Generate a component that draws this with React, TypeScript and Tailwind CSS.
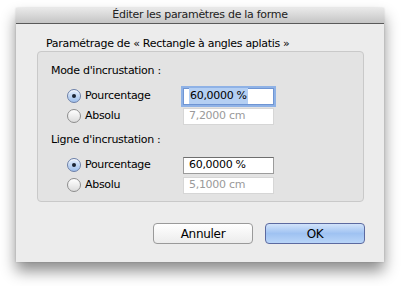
import React from "react";

const font = { fontFamily: '"Lucida Grande", "DejaVu Sans", sans-serif' };

function Radio({ checked }: { checked?: boolean }) {
  return checked ? (
    <span className="flex h-[14px] w-[14px] items-center justify-center rounded-full border border-[#6b7fa8] bg-gradient-to-b from-[#e3edfb] to-[#9fc0ec] shadow-[inset_0_1px_1px_rgba(255,255,255,0.8)]">
      <span className="h-[4px] w-[4px] rounded-full bg-[#1b2433]" />
    </span>
  ) : (
    <span className="h-[14px] w-[14px] rounded-full border border-[#8e8e8e] bg-gradient-to-b from-[#ffffff] to-[#dcdcdc]" />
  );
}

function Field({ value, focused, disabled }: { value: string; focused?: boolean; disabled?: boolean }) {
  return (
    <div
      className={
        "flex h-[17px] w-[91px] items-center border bg-white pl-[5px] " +
        (focused
          ? "border-[#6f95d3] shadow-[0_0_0_2px_#8fb2e6]"
          : disabled
          ? "border-[#d6d6d6] text-[#9a9a9a]"
          : "border-[#9c9c9c] border-t-[#6e6e6e] text-black")
      }
    >
      {focused ? <span className="bg-[#b4cff3] px-[1px] text-black">{value}</span> : value}
    </div>
  );
}

function Row({ label, checked, value, focused, disabled }: { label: string; checked?: boolean; value: string; focused?: boolean; disabled?: boolean }) {
  return (
    <div className="flex h-[20px] items-center">
      <div className="flex w-[145px] items-center gap-[4px] pl-[29px]">
        <Radio checked={checked} />
        <span>{label}</span>
      </div>
      <Field value={value} focused={focused} disabled={disabled} />
    </div>
  );
}

export default function App() {
  return (
    <div className="h-[286px] w-[401px] overflow-hidden bg-white pl-[16px] pt-[8px] text-[11px] tracking-[-0.3px] text-black" style={font}>
      <div className="flex h-[254px] w-[368px] flex-col bg-[#ececec] shadow-[0_9px_14px_rgba(0,0,0,0.45),0_0_2px_rgba(0,0,0,0.15)]">
        <div className="flex h-[16px] items-center justify-center border-b border-[#595959] bg-gradient-to-b from-[#e9e9e9] to-[#c5c5c5] text-[11px] text-[#222]">
          Éditer les paramètres de la forme
        </div>
        <div className="pl-[30px] pt-[12px] leading-[15px]">Paramétrage de « Rectangle à angles aplatis »</div>
        <div className="ml-[21px] w-[327px] rounded-[4px] border border-[#c9c9c9] bg-[#e3e3e3] pb-[6px] pt-[11px] leading-[16px]">
          <div className="pl-[13px]">Mode d'incrustation :</div>
          <div className="mt-[7px]">
            <Row label="Pourcentage" checked value="60,0000 %" focused />
            <Row label="Absolu" value="7,2000 cm" disabled />
          </div>
          <div className="mt-[6px] pl-[13px]">Ligne d'incrustation :</div>
          <div className="mt-[7px]">
            <Row label="Pourcentage" checked value="60,0000 %" />
            <Row label="Absolu" value="5,1000 cm" disabled />
          </div>
        </div>
        <div className="mt-[21px] flex justify-end gap-[12px] pr-[19px]">
          <button className="flex h-[21px] w-[100px] items-center justify-center rounded-[4px] border border-[#9a9a9a] bg-gradient-to-b from-[#ffffff] to-[#ececec] text-[12px]">
            Annuler
          </button>
          <button className="flex h-[21px] w-[100px] items-center justify-center rounded-[4px] border border-[#5c6aa0] bg-gradient-to-b from-[#d2e3fa] via-[#9fc2f2] to-[#b9d5f8] text-[12px]">
            OK
          </button>
        </div>
      </div>
    </div>
  );
}
